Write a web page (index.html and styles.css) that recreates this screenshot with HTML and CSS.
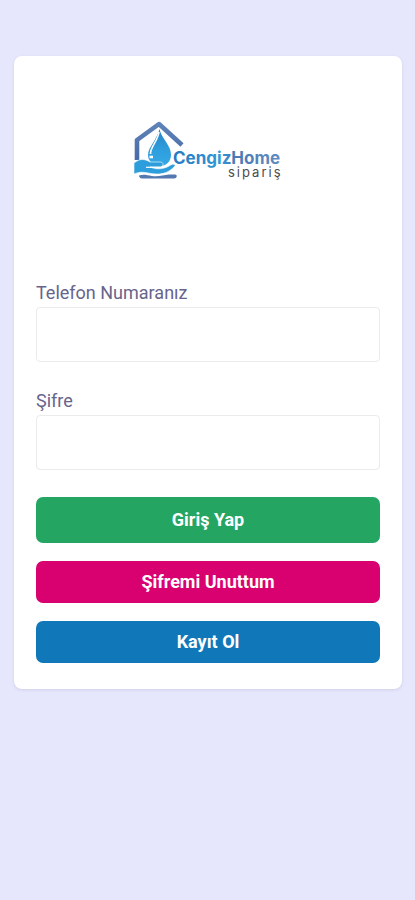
FILE: index.html
```html
<!DOCTYPE html>
<html lang="tr">
<head>
<meta charset="utf-8">
<meta name="viewport" content="width=device-width, initial-scale=1">
<title>CengizHome Sipariş</title>
<link rel="stylesheet" href="styles.css">
</head>
<body>
<main class="card">
  <div class="brand">
    <svg class="logo" viewBox="0 0 150 62" role="img" aria-label="CengizHome sipariş">
      <defs>
        <linearGradient id="roof" x1="0" y1="0" x2="0" y2="1">
          <stop offset="0" stop-color="#5e83b8"/>
          <stop offset="1" stop-color="#496ba6"/>
        </linearGradient>
        <linearGradient id="drop" x1="0" y1="0" x2="0" y2="1">
          <stop offset="0" stop-color="#2583c6"/>
          <stop offset="0.6" stop-color="#2f9fdd"/>
          <stop offset="1" stop-color="#34a9e6"/>
        </linearGradient>
        <linearGradient id="word" gradientUnits="userSpaceOnUse" x1="40" y1="0" x2="148" y2="0">
          <stop offset="0" stop-color="#2878bd"/>
          <stop offset="0.45" stop-color="#3098d8"/>
          <stop offset="0.56" stop-color="#4a78b4"/>
          <stop offset="1" stop-color="#5f8cc0"/>
        </linearGradient>
      </defs>
      <path d="M4 40V20L26 4L49 25" fill="none" stroke="url(#roof)" stroke-width="4.600" stroke-linejoin="round"/>
      <path d="M26.500 9C28 18 38 25 38 34.500C38 42 33 46 27 46C20 46 15 41 15 35C15 27 24 20 26.500 9Z" fill="url(#drop)"/>
      <path d="M26 12C25 21 17 27 17.500 34" fill="none" stroke="#fff" stroke-width="1.600"/>
      <path d="M16.500 37H20" fill="none" stroke="#fff" stroke-width="2.600"/>
      <path d="M1 43C7 38 12 39 17 42L27 42C31 42 31 46 27 47H17C24 50 31 49 36 46C40 43 44 44 41 47C36 52 31 54 24 54C15 54 10 50 1 54Z" fill="#2d9edb" stroke="#fff" stroke-width="0.600"/>
      <path d="M13 47.300H27" fill="none" stroke="#fff" stroke-width="1.200"/>
      <path d="M6 55.500C10 54 14 55 19 56C25 57 31 55 36 54.500H42C45 54.500 44 58.500 41 58.500H9C7 58.500 6 57 6 55.500Z" fill="#5478b0"/>
      <text class="wordmark" x="40" y="44">CengizHome</text>
      <text class="tagline" x="95" y="57">sipariş</text>
    </svg>
  </div>
  <form class="form">
    <div class="field">
      <label for="phone">Telefon Numaranız</label>
      <input id="phone" type="tel" name="phone" autocomplete="tel">
    </div>
    <div class="field">
      <label for="password">Şifre</label>
      <input id="password" type="password" name="password" autocomplete="current-password">
    </div>
    <div class="actions">
      <button class="button login" type="submit">Giriş Yap</button>
      <button class="button forgot" type="button">Şifremi Unuttum</button>
      <button class="button register" type="button">Kayıt Ol</button>
    </div>
  </form>
</main>
</body>
</html>
```
FILE: styles.css
```css
* {
  box-sizing: border-box;
}

body {
  margin: 0;
  padding: 56px 13px 56px 14px;
  background: #e6e6fc;
  font-family: Roboto, "Liberation Sans", sans-serif;
}

.card {
  padding: 64px 22px 26px;
  background: #fff;
  border-radius: 8px;
  box-shadow: 0 1px 3px rgba(70, 70, 120, 0.14);
}

.brand {
  display: flex;
  justify-content: center;
  padding-bottom: 99px;
}

.logo {
  width: 150px;
  height: 62px;
}

.wordmark {
  font: 700 17px Inter, sans-serif;
  fill: url(#word);
}

.tagline {
  font: 400 13px Inter, sans-serif;
  letter-spacing: 2px;
  fill: #4c4c50;
}

.form {
  display: flex;
  flex-direction: column;
  gap: 27px;
}

.field {
  display: flex;
  flex-direction: column;
  gap: 2px;
}

.field label {
  color: #67648c;
  font-size: 18px;
  line-height: 24px;
}

.field input {
  width: 100%;
  height: 55px;
  padding: 0 14px;
  border: 1px solid #ebebee;
  border-radius: 4px;
  background: #fff;
  color: #67648c;
  font: inherit;
  font-size: 18px;
}

.actions {
  display: flex;
  flex-direction: column;
  gap: 18px;
}

.button {
  height: 42px;
  padding: 0;
  border: 0;
  border-radius: 7px;
  color: #fff;
  font: 700 18px/24px Roboto, "Liberation Sans", sans-serif;
}

.login {
  height: 46px;
  background: #25a562;
}

.forgot {
  background: #d9006f;
}

.register {
  background: #1078b9;
}
```
